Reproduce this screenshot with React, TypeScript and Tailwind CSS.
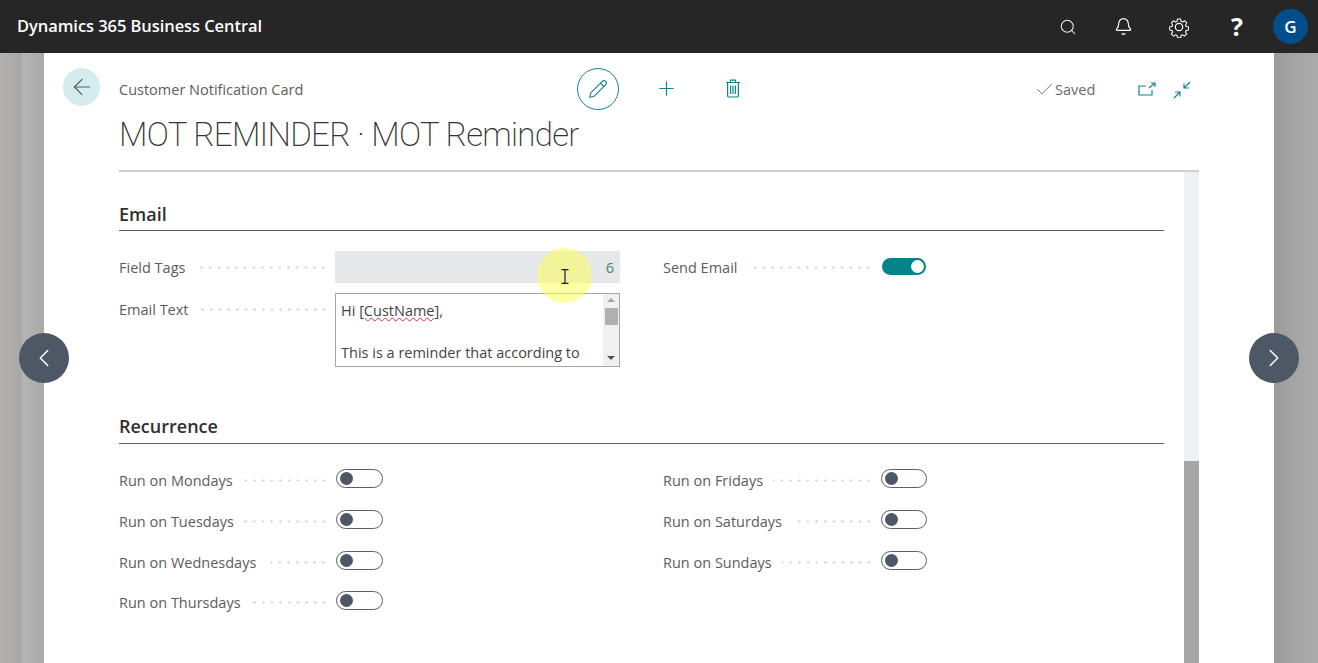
import React from "react";
import { Search, Bell, Plus, ArrowLeft, ChevronLeft, ChevronRight, Check, Pencil } from "lucide-react";

function Gear() {
  return (
    <svg width="22" height="22" viewBox="0 0 24 24" fill="none" stroke="#fff" strokeWidth="1.3" strokeLinejoin="round">
      <path d="M10 2.2h4l.6 2.9 1.9.8 2.5-1.6 2.7 2.8-1.6 2.5.8 1.9 2.9.5v3.9l-2.9.6-.8 1.9 1.6 2.5-2.8 2.7-2.4-1.6-1.9.8-.6 2.9h-3.9l-.6-2.9-1.9-.8-2.5 1.6-2.7-2.8 1.6-2.4-.8-1.9-2.9-.6v-3.9l2.9-.5.8-1.9-1.6-2.5L5 4.3l2.5 1.6 1.9-.8z" transform="translate(1.6 1.4) scale(.87)" />
      <circle cx="12" cy="12" r="4" />
    </svg>
  );
}

function TrashIcon() {
  return (
    <svg width="16" height="19" viewBox="0 0 16 19" fill="none" stroke="#12858c" strokeWidth="1.2" className="ml-[47px] mb-[2px]">
      <path d="M1 3.500h14M5.500 3.500V1.200h5v2.300" />
      <path d="M2.600 3.500v13.200a1.300 1.300 0 0 0 1.300 1.300h8.200a1.300 1.300 0 0 0 1.300-1.300V3.500" />
      <path d="M5.600 6.500v8.500M8 6.500v8.500M10.400 6.500v8.500" />
    </svg>
  );
}

function Leader() {
  return <span className="ml-[10px] block h-[3px] min-w-0 flex-1 bg-[radial-gradient(circle,#d6d7d9_1px,transparent_1.2px)] bg-[length:8.7px_3px] bg-right" />;
}

function Toggle({ on = false, right = false }: { on?: boolean; right?: boolean }) {
  if (on) {
    return (
      <span className="flex h-[17px] w-[44px] items-center justify-end rounded-full bg-[#00838a] pr-[2px]">
        <span className="h-[13px] w-[13px] rounded-full bg-white" />
      </span>
    );
  }
  return (
    <span className={`flex h-[19px] items-center rounded-full border border-[#5a5f66] bg-white pl-[3px] ${right ? "w-[46px]" : "w-[47px]"}`}>
      <span className="h-[13px] w-[13px] rounded-full bg-[#4d5766]" />
    </span>
  );
}

function ToggleRow({ label, right = false, tight = false }: { label: string; right?: boolean; tight?: boolean }) {
  return (
    <div className={`flex h-[19px] items-center ${tight ? "-mt-px" : ""}`}>
      <div className={`flex items-center pr-[8px] pt-[4px] ${right ? "w-[218px]" : "w-[217px]"}`}>
        <span className="whitespace-nowrap">{label}</span>
        <Leader />
      </div>
      <Toggle right={right} />
    </div>
  );
}

export default function App() {
  return (
    <div className="relative flex h-[663px] w-[1318px] flex-col overflow-hidden bg-white font-['Open_Sans','Noto_Sans',sans-serif] text-[14.5px] leading-[19px] text-[#5c5c5c]">
      <header className="flex h-[53px] shrink-0 items-center justify-between bg-[#262626] pl-[17px] pr-[10px] text-white">
        <span className="mb-[3px] text-[16.5px] font-semibold tracking-[-0.07px]">Dynamics 365 Business Central</span>
        <div className="flex items-center">
          <Search size={18} strokeWidth={1.4} className="mr-[37px] text-[#eee]" />
          <Bell size={19} strokeWidth={1.5} className="mr-[35px]" />
          <span className="mr-[41px]"><Gear /></span>
          <span className="mr-[30px] text-[25px] font-bold leading-none">?</span>
          <span className="flex h-[35px] w-[35px] items-center justify-center rounded-full bg-[#004e8c] text-[17px] font-semibold">G</span>
        </div>
      </header>

      <main className="flex min-h-0 flex-1">
        <div className="w-[44px] shrink-0 bg-[linear-gradient(90deg,#b2b1af_0,#a8a7a6_22px,#b5b5b5_22px,#a9a9a9_44px)]" />

        <section className="flex min-w-0 flex-1 flex-col bg-white pl-[75px] pr-[75px]">
          <div className="relative h-[119px] shrink-0 border-b-2 border-[#cfcfcf]">
            <span className="absolute left-[-56px] top-[15px] flex h-[38px] w-[37px] items-center justify-center rounded-full bg-[#d5ecef] text-[#505c66]">
              <ArrowLeft size={26} strokeWidth={1.1} />
            </span>
            <div className="pt-[27px] leading-[19px]">Customer Notification Card</div>
            <h1 className="mt-[14px] whitespace-nowrap font-['Roboto','Open_Sans',sans-serif] text-[33px] font-extralight leading-[43px] tracking-[-0.72px] text-[#333]">MOT REMINDER · MOT Reminder</h1>

            <div className="absolute left-[458px] top-[15px] flex items-center">
              <span className="flex h-[42px] w-[42px] items-center justify-center rounded-full border border-[#12858c] text-[#12858c]">
                <Pencil size={20} strokeWidth={1.3} />
              </span>
              <Plus size={23} strokeWidth={1.2} className="ml-[36px] mb-[2px] text-[#12858c]" />
              <TrashIcon />
            </div>
            <div className="absolute left-[915px] top-[26px] flex items-center text-[#6a6a6a]">
              <Check size={21} strokeWidth={1} className="text-[#606060]" />
              <span>Saved</span>
              <svg width="20" height="16" viewBox="0 0 20 16" fill="none" stroke="#12858c" strokeWidth="1.2" className="ml-[42px]">
                <path d="M9 4H2v9h13V8" />
                <path d="M12 6l6-5M14 1h4v4" />
              </svg>
              <svg width="20" height="20" viewBox="0 0 20 20" fill="none" stroke="#12858c" strokeWidth="1.2" className="ml-[15px]">
                <path d="M18 2l-6 6M12 3.500V8h5" />
                <path d="M2 18l6-6M8 16.500V12H3" />
              </svg>
            </div>
          </div>

          <div className="flex min-h-0 flex-1">
            <div className="min-w-0 flex-1 pr-[20px]">
              <h2 className="mt-[29px] border-b border-[#5f5f5f] pb-[3px] text-[18px] font-semibold leading-[26px] text-[#2f2f2f]">Email</h2>
              <div className="mt-[20px] grid grid-cols-2 gap-x-[43px]">
                <div>
                  <div className="flex h-[32px] items-center">
                    <div className="flex w-[216px] items-center pr-[7px]">
                      <span>Field Tags</span>
                      <Leader />
                    </div>
                    <div className="relative flex h-[32px] flex-1 items-center justify-end bg-[#e6e7e8] pr-[6px] text-[#3a8a80]">
                      6
                      <span className="absolute left-[202px] top-[-3px] flex h-[55px] w-[55px] items-center justify-center rounded-full bg-[#ffff4d]/50">
                        <svg width="10" height="15" viewBox="0 0 10 15" fill="none" stroke="#1b1b5a" strokeWidth="1.2" className="mt-[2px]">
                          <path d="M1.500 .6h7M1.500 14.400h7M5 .6v13.800" />
                        </svg>
                      </span>
                    </div>
                  </div>
                  <div className="mt-[10px] flex">
                    <div className="flex h-[32px] w-[216px] items-center self-start pr-[7px]">
                      <span>Email Text</span>
                      <Leader />
                    </div>
                    <div className="flex h-[74px] flex-1 overflow-hidden border border-[#a6a6a6] bg-white">
                      <div className="min-w-0 flex-1 overflow-hidden whitespace-nowrap pl-[5px] pt-[6px] leading-[21px] text-[#444]">
                        <div>Hi <span className="underline decoration-[#d13438] decoration-wavy decoration-1">[CustName]</span>,</div>
                        <div className="mt-[21px]">This is a reminder that according to</div>
                      </div>
                      <div className="flex w-[16px] shrink-0 flex-col items-center bg-[#f0f0f0]">
                        <span className="mt-[4px] h-0 w-0 border-x-[4px] border-b-[4px] border-x-transparent border-b-[#a3a3a3]" />
                        <span className="mt-[6px] h-[17px] w-[13px] bg-[#b0b0b0]" />
                        <span className="mt-auto mb-[6px] h-0 w-0 border-x-[4px] border-t-[4px] border-x-transparent border-t-[#505050]" />
                      </div>
                    </div>
                  </div>
                </div>
                <div>
                  <div className="flex h-[32px] items-start pt-[7px]">
                    <div className="flex w-[219px] items-center pr-[9px]">
                      <span>Send Email</span>
                      <Leader />
                    </div>
                    <Toggle on />
                  </div>
                </div>
              </div>

              <h2 className="mt-[46px] border-b border-[#5f5f5f] pb-[4px] text-[18px] font-semibold leading-[26px] text-[#2f2f2f]">Recurrence</h2>
              <div className="mt-[25px] grid grid-cols-2 gap-x-[43px]">
                <div className="flex flex-col gap-y-[22px]">
                  <ToggleRow label="Run on Mondays" />
                  <ToggleRow label="Run on Tuesdays" />
                  <ToggleRow label="Run on Wednesdays" />
                  <ToggleRow tight label="Run on Thursdays" />
                </div>
                <div className="flex flex-col gap-y-[22px]">
                  <ToggleRow right label="Run on Fridays" />
                  <ToggleRow right label="Run on Saturdays" />
                  <ToggleRow right label="Run on Sundays" />
                </div>
              </div>
            </div>
            <div className="flex w-[15px] shrink-0 flex-col">
              <div className="h-[289px] bg-[#eff0f1]" />
              <div className="flex-1 bg-[#a6a6a6]" />
            </div>
          </div>
        </section>

        <div className="w-[44px] shrink-0 bg-[linear-gradient(90deg,#9c9b9b_0,#a4a4a4_20px,#acacac_44px)]" />
      </main>

      <span className="absolute left-[19px] top-[333px] flex h-[50px] w-[50px] items-center justify-center rounded-full bg-[#4d5766] text-white">
        <ChevronLeft size={30} strokeWidth={1.2} />
      </span>
      <span className="absolute left-[1249px] top-[333px] flex h-[50px] w-[50px] items-center justify-center rounded-full bg-[#4d5766] text-white">
        <ChevronRight size={30} strokeWidth={1.2} />
      </span>
    </div>
  );
}
